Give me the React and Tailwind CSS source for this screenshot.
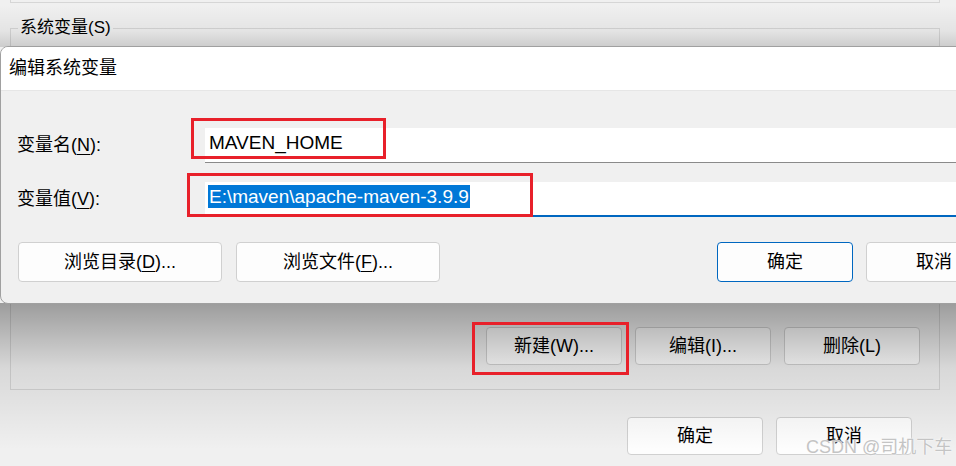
import React from 'react';

const Key = ({ children }) => (
  <span className="underline decoration-1 underline-offset-[3px]">{children}</span>
);

const WinButton = ({ children, primary = false, className = "" }) => (
  <button
    className={`flex items-center justify-center rounded-[4px] border bg-[#fdfdfd] text-[18px] leading-none text-black ${
      primary ? "border-[#0067c0]" : "border-[#d0d0d0]"
    } ${className}`}
  >
    {children}
  </button>
);

// red annotation rectangles drawn over the screenshot
const Mark = ({ className }) => (
  <div className={`absolute z-20 border-[3px] border-[#e8202a] ${className}`} />
);

const EditDialog = () => (
  <div className="absolute left-0 top-[46px] z-10 h-[258px] w-[1020px] overflow-hidden rounded-[8px] border border-[#a0a0a0] bg-[#f0f0f0]">
    <div className="flex h-[44px] items-center border-b border-[#e6e6e6] bg-white pl-[8px] text-[18px]">
      编辑系统变量
    </div>

    <div className="flex flex-col pl-[16px] pr-[17px] pt-[37px]">
      <div className="grid grid-cols-[188px_1fr] items-center gap-y-[19px]">
        <div className="text-[18px]">
          变量名(<Key>N</Key>):
        </div>
        <div className="flex h-[35px] items-center border-b border-[#8a8a8a] bg-white pb-[6px] pl-[3px] text-[19px]">
          <span className="px-[1px] leading-[23px]">MAVEN_HOME</span>
        </div>

        <div className="text-[18px]">
          变量值(<Key>V</Key>):
        </div>
        <div className="flex h-[35px] items-center border-b-2 border-[#0067c0] bg-white pb-[5px] pl-[3px] text-[19px]">
          <span className="bg-[#0078d7] px-[1px] leading-[23px] text-white">
            E:\maven\apache-maven-3.9.9
          </span>
        </div>
      </div>

      <div className="mt-[25px] ml-[1px] flex gap-[14px]">
        <WinButton className="h-[40px] w-[204px]">
          浏览目录(<Key>D</Key>)...
        </WinButton>
        <WinButton className="h-[40px] w-[204px]">
          浏览文件(<Key>F</Key>)...
        </WinButton>
        <div className="ml-auto flex gap-[13px]">
          <WinButton primary className="h-[40px] w-[136px]">确定</WinButton>
          <WinButton className="h-[40px] w-[136px]">取消</WinButton>
        </div>
      </div>
    </div>
  </div>
);

export default function App() {
  return (
    <div className="relative h-[466px] w-[956px] overflow-hidden bg-[#f0f0f0] text-black font-['Liberation_Sans','Noto_Sans_CJK_SC',sans-serif]">
      {/* window behind the dialog */}
      <div className="ml-[10px] h-[3px] w-[930px] border-x border-b border-[#d6d6d6]" />

      <div className="relative ml-[10px] mt-[25px] flex h-[362px] w-[930px] items-end justify-end gap-[13px] border border-[#d6d6d6] pb-[24px] pr-[19px]">
        <span className="absolute -top-[11px] left-[7px] bg-[#f0f0f0] px-[2px] text-[17px] leading-[20px]">
          系统变量(S)
        </span>
        <WinButton className="h-[38px] w-[136px]">新建(W)...</WinButton>
        <WinButton className="h-[38px] w-[136px]">编辑(I)...</WinButton>
        <WinButton className="h-[38px] w-[136px]">删除(L)</WinButton>
      </div>

      <div className="mt-[27px] flex justify-end gap-[13px] pr-[44px]">
        <WinButton className="h-[38px] w-[136px]">确定</WinButton>
        <WinButton className="h-[38px] w-[136px]">取消</WinButton>
      </div>

      {/* drop shadow of the dialog, cast over the window behind */}
      <div className="pointer-events-none absolute left-0 top-0 z-[5] h-[47px] w-full bg-linear-to-b from-transparent from-10% via-black/5 via-65% to-black/15" />
      <div className="pointer-events-none absolute left-0 top-[303px] z-[5] h-[163px] w-full bg-linear-to-b from-black/35 via-black/10 via-40% to-transparent to-90%" />

      <EditDialog />

      <Mark className="left-[191px] top-[118px] h-[41px] w-[195px]" />
      <Mark className="left-[187px] top-[173px] h-[44px] w-[346px]" />
      <Mark className="left-[472px] top-[322px] h-[53px] w-[157px]" />

      <div className="absolute left-[806px] top-[437px] z-30 text-[18px] leading-[20px] text-[#c4c4c4] [text-shadow:0_0_1px_#fff,0_0_2px_#fff]">
        CSDN @司机下车
      </div>
    </div>
  );
}
